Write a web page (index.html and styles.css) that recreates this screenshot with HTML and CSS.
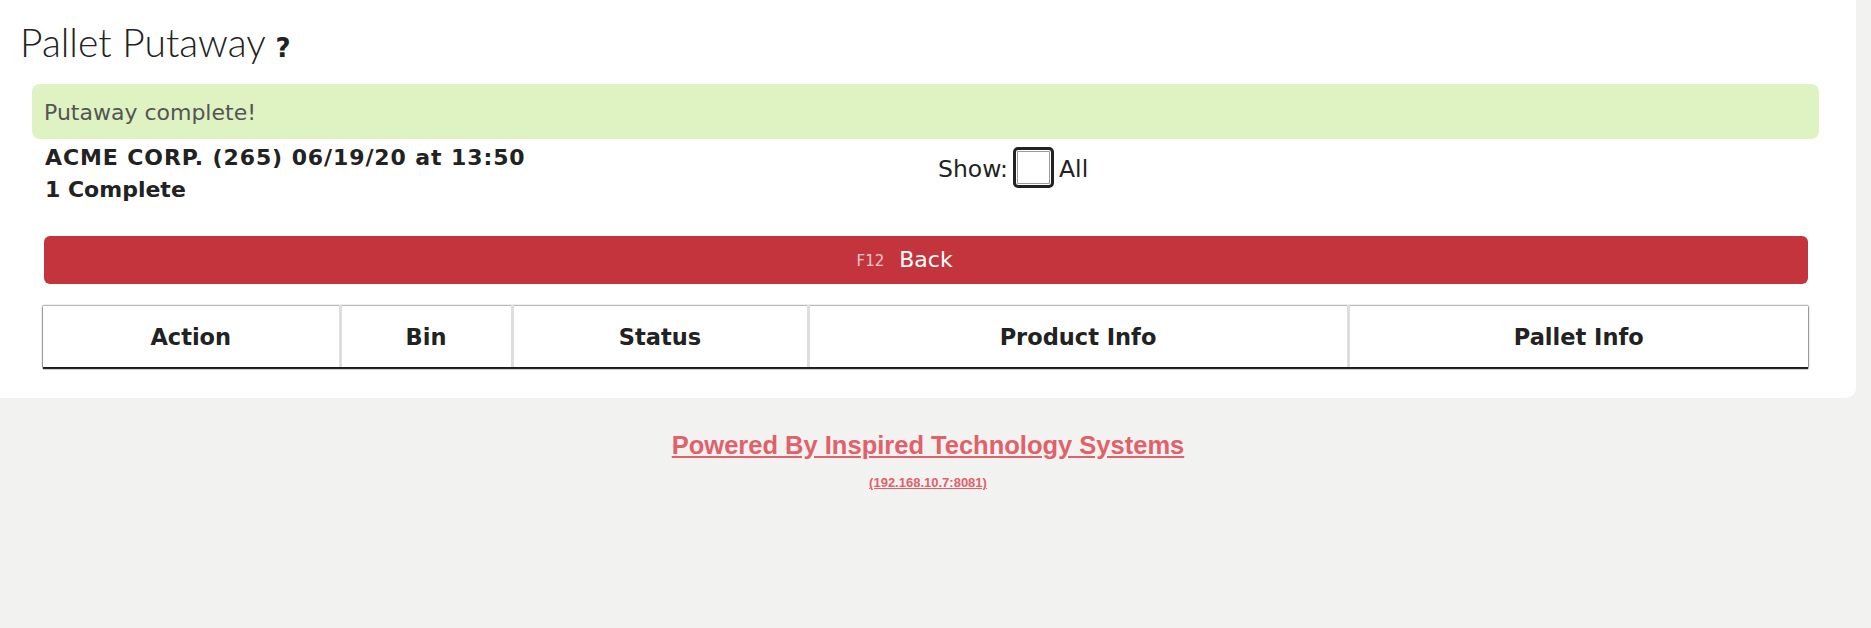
FILE: index.html
```html
<!DOCTYPE html>
<html lang="en">
<head>
  <meta charset="UTF-8" />
  <meta name="viewport" content="width=device-width, initial-scale=1.0" />
  <title>Pallet Putaway</title>
  <link rel="stylesheet" href="styles.css">
</head>
<body>
  <div class="page">
    <div class="card">
      <h1 class="title">Pallet Putaway <span class="help">?</span></h1>
      <div class="alert">Putaway complete!</div>

      <div class="content">
        <div class="info">
          <div class="summary">
            <div class="party">ACME CORP. (265) 06/19/20 at 13:50</div>
            <div>1 Complete</div>
          </div>
          <label class="show">Show: <input type="checkbox" class="check" /> All</label>
        </div>

        <button class="back"><span class="label"><span class="key">F12</span>Back</span></button>

        <table class="grid">
          <colgroup>
            <col class="c-action">
            <col class="c-bin">
            <col class="c-status">
            <col class="c-product">
            <col class="c-pallet">
          </colgroup>
          <thead>
            <tr>
              <th>Action</th>
              <th>Bin</th>
              <th>Status</th>
              <th>Product Info</th>
              <th>Pallet Info</th>
            </tr>
          </thead>
        </table>
      </div>
    </div>

    <div class="footer">
      <a href="#" class="powered">Powered By Inspired Technology Systems</a>
      <a href="#" class="host">(192.168.10.7:8081)</a>
    </div>
  </div>
</body>
</html>
```

FILE: styles.css
```css
body {
  margin: 0;
  background: #f2f2f1;
  font-family: "DejaVu Sans", Verdana, sans-serif;
  color: #222;
}
.page {
  width: 1856px;
}
.card {
  background: #fff;
  padding: 19px 0 31px 0;
  border-radius: 0 0 10px 0;
}
.title {
  margin: 0 0 13px 20px;
  font-family: Lato, sans-serif;
  font-weight: 300;
  font-size: 39px;
  line-height: 46px;
  color: #222;
}
.help {
  font-family: "DejaVu Sans", sans-serif;
  font-weight: bold;
  font-size: 26px;
}
.alert {
  margin: 0 37px 0 32px;
  height: 55px;
  padding: 2px 12px 0;
  box-sizing: border-box;
  display: flex;
  align-items: center;
  background: #dff2c2;
  border-radius: 8px;
  color: #555;
  font-size: 22px;
}
.content {
  padding: 0 48px 0 44px;
}
.info {
  display: grid;
  grid-template-columns: 1fr 1fr;
  padding-top: 3px;
}
.summary {
  font-weight: bold;
  font-size: 22px;
  line-height: 32px;
  padding-left: 1px;
}
.party {
  letter-spacing: 0.9px;
}
.show {
  display: flex;
  align-items: center;
  gap: 5px;
  align-self: start;
  margin-top: 3px;
  height: 41px;
  padding: 3px 0 0 12px;
  font-size: 23.5px;
  line-height: 26px;
}
.check {
  appearance: none;
  margin: -3px 0 0 0;
  width: 41px;
  height: 41px;
  border: 3px solid #222;
  border-radius: 5px;
  box-shadow: inset 0 0 0 1px #fff, inset 0 0 0 2px #9a9a9a;
  background: #fff;
}
.back {
  display: block;
  width: 100%;
  height: 48px;
  margin-top: 30px;
  border: none;
  border-radius: 6px;
  background: #c3343c;
  color: #fff;
  font-family: "DejaVu Sans", sans-serif;
  font-size: 22px;
  line-height: 26px;
  padding: 0;
  text-align: center;
}
.label {
  position: relative;
}
.key {
  position: absolute;
  right: 100%;
  bottom: 3px;
  margin-right: 15px;
  font-size: 15px;
  line-height: 16px;
  color: #f3c9cb;
}
.grid {
  margin: 21px 0 0 -1px;
  width: calc(100% + 1px);
  border-collapse: collapse;
  table-layout: fixed;
  border-top: 1px solid #b8b8b8;
  box-shadow: 0 1px 2px #111, 0 2px 1px #333;
}
.c-action { width: 297px; }
.c-bin { width: 172px; }
.c-status { width: 296px; }
.c-product { width: 540px; }
.c-pallet { width: 460px; }
.grid th {
  height: 61px;
  padding: 0;
  font-size: 22.5px;
  font-weight: bold;
  color: #222;
  background: #fff;
  text-align: center;
}
.grid th + th {
  border-left: 3px solid #dedede;
}
.footer {
  margin-top: 33px;
  text-align: center;
  font-family: "Liberation Sans", Arial, sans-serif;
  font-weight: bold;
}
.footer a {
  display: block;
  color: #e0616a;
}
.powered {
  font-size: 25.5px;
  line-height: 29px;
}
.host {
  margin-top: 15px;
  font-size: 13px;
  line-height: 15px;
}
```
